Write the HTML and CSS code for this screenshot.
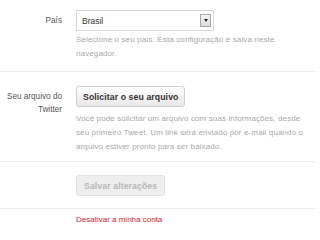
FILE: index.html
```
<!DOCTYPE html>
<html lang="pt">
<head>
<meta charset="utf-8">
<link rel="stylesheet" href="styles.css">
</head>
<body>
<div class="form">
  <div class="row row-country">
    <div class="label label-country">País</div>
    <div class="field">
      <div class="select"><span class="select-text">Brasil</span><span class="arrow"><span class="tri"></span></span></div>
      <p class="help help-country">Selecione o seu país. Esta configuração é salva neste navegador.</p>
    </div>
  </div>
  <div class="row row-archive">
    <div class="label label-archive">Seu arquivo do<br>Twitter</div>
    <div class="field">
      <button class="btn">Solicitar o seu arquivo</button>
      <p class="help help-archive">Você pode solicitar um arquivo com suas informações, desde seu primeiro Tweet. Um link será enviado por e-mail quando o arquivo estiver pronto para ser baixado.</p>
    </div>
  </div>
  <div class="row row-save">
    <div class="label"></div>
    <div class="field">
      <button class="btn btn-disabled" disabled>Salvar alterações</button>
    </div>
  </div>
  <div class="row row-deactivate">
    <div class="label"></div>
    <div class="field">
      <a class="deactivate" href="#">Desativar a minha conta</a>
    </div>
  </div>
</div>
</body>
</html>
```
FILE: styles.css
```
html, body {
  margin: 0;
  padding: 0;
  background: #fff;
}
body {
  font-family: "Liberation Sans", Arial, sans-serif;
  width: 316px;
  height: 236px;
  overflow: hidden;
}
.row {
  display: grid;
  grid-template-columns: 62px 1fr;
  column-gap: 14px;
  border-bottom: 1px solid #ececec;
}
.row-country { padding: 10px 0 10px; }
.row-archive { padding: 14px 0 7px; }
.row-save { padding: 13px 0 12px; }
.row-deactivate { padding: 4px 0 0; border-bottom: none; }
.label {
  text-align: right;
  font-size: 8.2px;
  color: #555;
  line-height: 13px;
}
.label-country { padding-top: 4px; }
.label-archive { padding-top: 4px; }
.field {
  min-width: 0;
}
.select {
  width: 138px;
  height: 21px;
  box-sizing: border-box;
  border: 1px solid #d6d6d6;
  background: #fff;
  display: flex;
  align-items: center;
  justify-content: space-between;
  padding: 0 2px 0 5px;
}
.select-text {
  font-size: 8.5px;
  color: #333;
}
.arrow {
  width: 11px;
  height: 13px;
  box-sizing: border-box;
  border: 1px solid #a8a8a8;
  background: linear-gradient(#f4f4f4, #dcdcdc);
  display: flex;
  align-items: center;
  justify-content: center;
}
.tri {
  width: 0;
  height: 0;
  border-left: 2.5px solid transparent;
  border-right: 2.5px solid transparent;
  border-top: 3px solid #222;
}
.help {
  margin: 0;
  font-size: 8px;
  line-height: 14px;
  color: #a8a8a8;
  letter-spacing: 0.12px;
}
.help-country { margin-top: 2px; width: 215px; }
.help-archive { margin-top: 5px; width: 235px; }
.btn {
  display: block;
  height: 21px;
  box-sizing: border-box;
  padding: 0 6px;
  border: 1px solid #d0d0d0;
  border-radius: 3px;
  background: linear-gradient(#ffffff, #e8e8e8);
  font-family: "Liberation Sans", Arial, sans-serif;
  font-weight: bold;
  font-size: 8.7px;
  color: #333;
  letter-spacing: 0.1px;
}
.btn-disabled {
  background: #eeeeee;
  border-color: #e2e2e2;
  color: #b8b8b8;
  padding: 0 7px;
}
.deactivate {
  display: block;
  font-size: 8px;
  line-height: 14px;
  color: #c8262e;
  text-decoration: none;
}
```
